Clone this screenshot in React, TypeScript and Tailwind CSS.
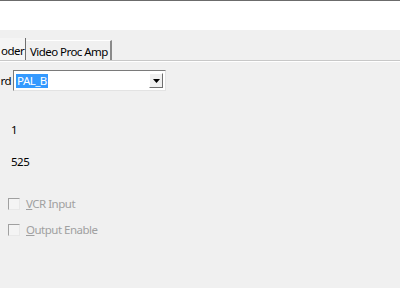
export default function App() {
  return (
    <div className="w-[400px] h-[288px] overflow-hidden bg-[#f0f0f0] font-['Noto_Sans',sans-serif] text-[11.5px] tracking-[-0.5px] text-black">
      {/* top white strip */}
      <div className="h-[30px] bg-white border-t border-[#6b6b6b]" />

      {/* tabs */}
      <div className="mt-[8px] flex items-end h-[22px]">
        <div className="h-[22px] w-[26px] shrink-0 flex items-center bg-[#f5f5f5] border-r border-[#6f6f6f] leading-none whitespace-nowrap">
          <span className="mt-[4px] ml-[1px]">oder</span>
        </div>
        <div className="h-[20px] w-[86px] shrink-0 flex items-center pl-[4px] bg-[#f0f0f0] border-r-2 border-[#8a8a8a] border-t border-t-white leading-none whitespace-nowrap">
          <span className="mt-[2px] tracking-[-0.55px]">Video Proc Amp</span>
        </div>
      </div>
      <div className="h-px bg-[#c8c8c8]" />
      <div className="h-px bg-white" />

      {/* standard combo */}
      <div className="mt-[8px] flex items-center gap-[2px]">
        <span className="w-[11px] text-right leading-none">rd</span>
        <div className="w-[153px] h-[21px] bg-white border border-[#7a7a7a] border-r-[#e3e3e3] border-b-[#e3e3e3] flex items-center pl-[2px] pr-[2px]">
          <span className="bg-[#3399ff] text-white px-[1px] leading-[14px]">PAL_B</span>
          <div className="ml-auto w-[14px] h-[15px] bg-[#f0f0f0] border border-white border-r-[#6f6f6f] border-b-[#6f6f6f] flex items-center justify-center">
            <svg width="7" height="4" viewBox="0 0 7 4">
              <path d="M0 0h7L3.5 4z" fill="#000" />
            </svg>
          </div>
        </div>
      </div>

      {/* values */}
      <div className="mt-[32px] pl-[11px] flex flex-col gap-[18px] leading-[14px]">
        <span>1</span>
        <span>525</span>
      </div>

      {/* checkboxes */}
      <div className="mt-[29px] pl-[8px] flex flex-col gap-[14px] text-[#a0a0a0] leading-[12px]">
        <label className="flex items-center gap-[6px]">
          <span className="w-[12px] h-[12px] bg-[#f4f4f4] border border-[#a0a0a0] border-r-[#e8e8e8] border-b-[#e8e8e8]" />
          <span>
            <span className="underline">V</span>CR Input
          </span>
        </label>
        <label className="flex items-center gap-[6px]">
          <span className="w-[12px] h-[12px] bg-[#f4f4f4] border border-[#a0a0a0] border-r-[#e8e8e8] border-b-[#e8e8e8]" />
          <span>
            <span className="underline">O</span>utput Enable
          </span>
        </label>
      </div>
    </div>
  );
}
